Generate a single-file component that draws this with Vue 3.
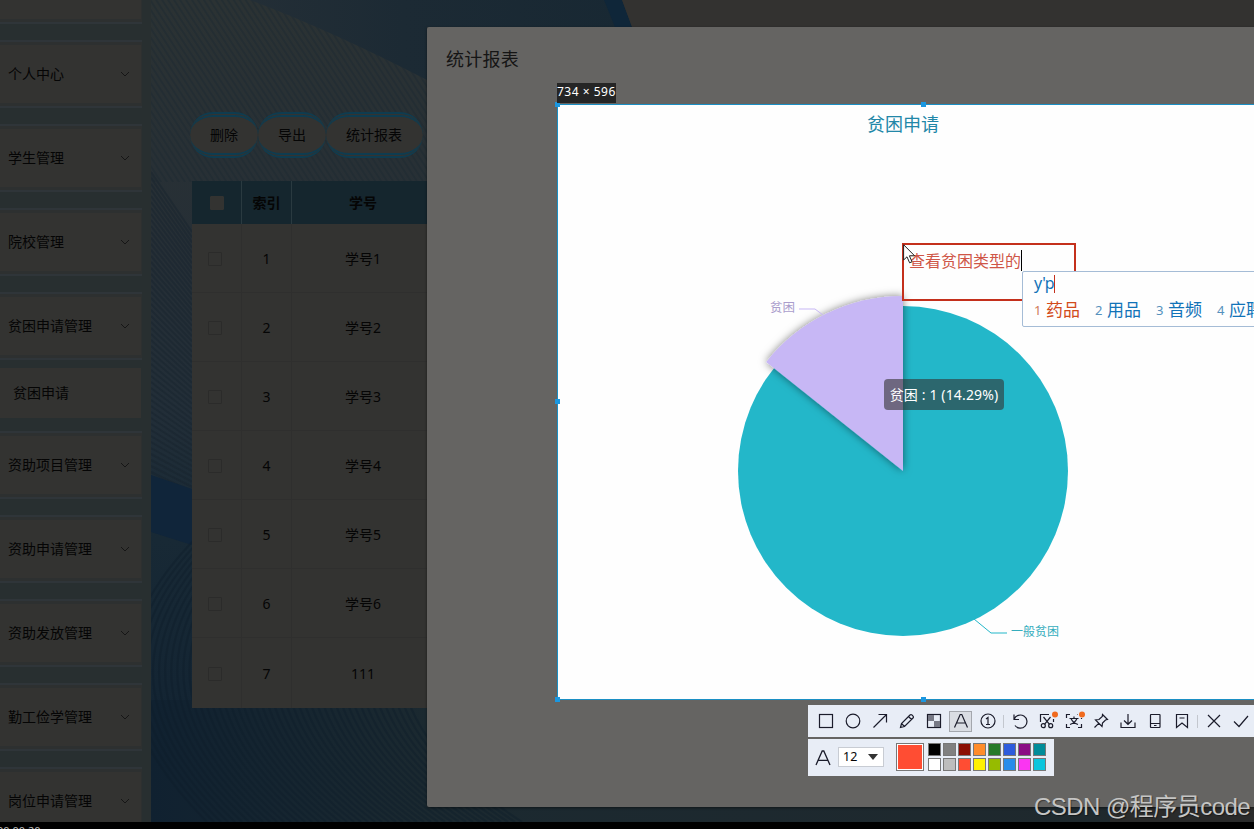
<script setup>
const menu = [
  { label: '', arrow: false },
  { label: '个人中心', arrow: true },
  { label: '学生管理', arrow: true },
  { label: '院校管理', arrow: true },
  { label: '贫困申请管理', arrow: true, child: '贫困申请' },
  { label: '资助项目管理', arrow: true },
  { label: '资助申请管理', arrow: true },
  { label: '资助发放管理', arrow: true },
  { label: '勤工俭学管理', arrow: true },
  { label: '岗位申请管理', arrow: true },
]
const actions = ['删除', '导出', '统计报表']
const rows = ['学号1', '学号2', '学号3', '学号4', '学号5', '学号6', '111']
const tools = ['rect', 'circle', 'arrow', 'pencil', 'mosaic', 'text', 'number', 'sep', 'undo', 'cut', 'translate', 'pin', 'save', 'phone', 'bookmark', 'sep', 'close', 'check']
const swatches = ['black', 'gray', 'maroon', 'orange', 'green', 'blue', 'purple', 'teal', 'white', 'silver', 'red', 'yellow', 'lime', 'sky', 'pink', 'cyan']
const words = ['药品', '用品', '音频', '应聘']
const fan = Array.from({ length: 52 }, (_, n) => `M151 ${172 + n * 6}L192 ${232 + n * 5.2}`)
</script>

<template>
  <div class="stage">
    <svg class="backdrop" width="1254" height="829" viewBox="0 0 1254 829">
      <defs>
        <linearGradient id="bg" x1="0" y1="0" x2="0" y2="1">
          <stop offset="0" stop-color="#2b3233" />
          <stop offset=".3" stop-color="#262f36" />
          <stop offset=".5" stop-color="#222e38" />
          <stop offset=".65" stop-color="#182935" />
          <stop offset="1" stop-color="#102131" />
        </linearGradient>
        <linearGradient id="sky" x1="0" y1="0" x2="1" y2="0">
          <stop offset="0" stop-color="#232e36" />
          <stop offset=".4" stop-color="#1c2a34" />
          <stop offset="1" stop-color="#182833" />
        </linearGradient>
        <linearGradient id="foot" x1="0" y1="0" x2="1" y2="0">
          <stop offset="0" stop-color="#102130" />
          <stop offset=".25" stop-color="#1b2930" />
          <stop offset="1" stop-color="#20292d" />
        </linearGradient>
        <pattern id="steep" width="5" height="5" patternUnits="userSpaceOnUse" patternTransform="rotate(-33)">
          <rect width="2" height="5" fill="#1d2a31" opacity=".5" />
        </pattern>
      </defs>
      <rect width="1254" height="829" fill="url(#bg)" />
      <rect width="460" height="182" fill="url(#steep)" />
      <path d="M250 0H622L632 27H427V80Q330 30 250 0Z" fill="url(#sky)" />
      <path d="M604 0H622L632 27H615Z" fill="#0f2639" />
      <path d="M622 0H1254V27H632Z" fill="#333230" />
      <path v-for="d in fan" :key="d" :d="d" fill="none" stroke="#17242e" stroke-width="2" opacity=".5" />
      <path d="M151 475L192 489V545L151 532Z" fill="#10253a" />
      <rect x="151" y="700" width="1103" height="122" fill="url(#foot)" />
      <path d="M1110 800H1254V822H1110Z" fill="#2a2b2b" />
      <g fill="none" stroke="#0e1d2a" stroke-width="2.2" opacity=".4">
        <path v-for="n in 46" :key="n" :d="`M${190 + n * 6} 538C${80 + n * 6} 650 ${120 + n * 6} 740 ${200 + n * 7} 822`" />
      </g>
    </svg>

    <div class="page">
      <nav class="side">
        <template v-for="(m, i) in menu" :key="i">
          <div class="item">
            <div class="card">
              <span>{{ m.label }}</span>
              <svg v-if="m.arrow" width="10" height="6" viewBox="0 0 10 6"><path d="M1 1L5 5L9 1" /></svg>
            </div>
          </div>
          <div v-if="m.child" class="child">{{ m.child }}</div>
        </template>
      </nav>
      <main class="content">
        <div class="actions">
          <button v-for="a in actions" :key="a">{{ a }}</button>
        </div>
        <div class="table">
          <div class="row head"><b><i class="box"></i></b><b>索引</b><b>学号</b></div>
          <div v-for="(r, i) in rows" :key="r" class="row">
            <span><i class="box"></i></span><span>{{ i + 1 }}</span><span>{{ r }}</span>
          </div>
        </div>
      </main>
    </div>

    <section class="dialog"><h2>统计报表</h2></section>

    <section class="capture">
      <svg class="chart" width="697" height="596" viewBox="557 104 697 596">
        <defs>
          <filter id="lift" x="-20%" y="-20%" width="140%" height="140%">
            <feDropShadow dx="0" dy="0" stdDeviation="4.5" flood-color="#000" flood-opacity=".5" />
          </filter>
        </defs>
        <rect x="557" y="104" width="697" height="596" fill="#fefefe" />
        <text x="903" y="130.5" font-size="18" text-anchor="middle" fill="#2287a8">贫困申请</text>
        <circle cx="903" cy="471" r="165" fill="#23b7c9" />
        <path d="M903 471L766.2 361.9A175 175 0 0 1 903 296Z" fill="#c7b7f5" filter="url(#lift)" />
        <path d="M799 309H815L823 315" fill="none" stroke="#c7b7f5" />
        <text x="770" y="312" font-size="12.5" fill="#aa9dcc">贫困</text>
        <path d="M974 619L991 633H1007" fill="none" stroke="#23b7c9" />
        <text x="1011" y="636" font-size="12" fill="#35adbd">一般贫困</text>
      </svg>
      <div class="tip">贫困 : 1 (14.29%)</div>
      <div class="frame"></div>
      <i class="knob tl"></i><i class="knob tc"></i><i class="knob ml"></i><i class="knob bl"></i><i class="knob bc"></i>
      <div class="size">734 × 596</div>
    </section>

    <div class="note"><span>查看贫困类型的</span><i></i></div>
    <svg class="cursor" width="14" height="21" viewBox="0 0 14 21"><path d="M.6.7V16L4 12.8L6.6 18.8L9 17.8L6.4 11.8H11.6Z" fill="#fff" stroke="#222" /></svg>

    <div class="ime">
      <div class="typed">y'p<i></i></div>
      <div class="words">
        <span v-for="(w, i) in words" :key="w" :class="{ on: i === 0 }"><small>{{ i + 1 }}</small>{{ w }}</span>
      </div>
    </div>

    <div class="tools">
      <template v-for="(t, i) in tools" :key="i">
        <i v-if="t === 'sep'" class="sep"></i>
        <span v-else class="tool" :class="{ active: t === 'text' }">
          <svg width="22" height="20" viewBox="0 0 22 20">
            <rect v-if="t === 'rect'" x="4.5" y="3.5" width="13" height="13" />
            <circle v-else-if="t === 'circle'" cx="11" cy="10" r="6.8" />
            <path v-else-if="t === 'arrow'" d="M4.5 16.5L17.5 3.5M9.5 3.5H17.5V11.5" />
            <path v-else-if="t === 'pencil'" d="M4.5 16.5L5.5 12.5L14 4Q15 3 16.2 4.2L16.8 4.8Q18 6 17 7L8.5 15.5ZM12.5 5.5L15.5 8.5M5.5 12.5L8.5 15.5" />
            <g v-else-if="t === 'mosaic'">
              <rect x="4.5" y="3.5" width="13" height="13" />
              <path d="M5 4H11V10H5ZM11 10H17V16H11Z" class="solid" />
            </g>
            <path v-else-if="t === 'text'" d="M4.5 16.5L10.2 3.5H11.8L17.5 16.5M6.5 12H15.5" />
            <g v-else-if="t === 'number'"><circle cx="11" cy="10" r="7" /><path d="M9 8L11 6.5V13.5M9 13.5H13" /></g>
            <path v-else-if="t === 'undo'" d="M5 3.5V8.5H10M5.2 8.2A6.6 6.6 0 1 1 6 14.5" />
            <g v-else-if="t === 'cut'">
              <path d="M4.5 11V3.5H13M17.5 8V11M7.5 6L13.5 13.3M14.5 6L8.5 13.3" />
              <circle cx="7.3" cy="14.7" r="2" /><circle cx="14.7" cy="14.7" r="2" />
              <circle class="dot" cx="19" cy="3.5" r="3" />
            </g>
            <g v-else-if="t === 'translate'">
              <path d="M3.5 7V3.5H7M14.5 3.5H15M18.5 7V8M3.5 13V16.5H7M15 16.5H18.5V13M6.5 7.5H15.5M11 5.5V7.5M14 7.5Q12 12 7 13.5M8 7.5Q10 12 15 13.5" />
              <circle class="dot" cx="19" cy="3.5" r="3" />
            </g>
            <path v-else-if="t === 'pin'" d="M12.5 3.5L17.5 8.5L15.5 9L12.5 12L12 15.5L5.5 9L9 8.5L12.3 5.5ZM8.7 12.3L4.5 16.5" />
            <path v-else-if="t === 'save'" d="M4 11.5V16.5H18V11.5M11 3V13M7 9.5L11 13.3L15 9.5" />
            <g v-else-if="t === 'phone'"><rect x="6.5" y="3.5" width="9.5" height="13" rx=".5" /><path d="M6.5 12.5H16M10 14.5H12.5" /></g>
            <path v-else-if="t === 'bookmark'" d="M5.5 3.5H16.5V16.5L11 12L5.5 16.5ZM8.5 7H13.5" />
            <path v-else-if="t === 'close'" d="M5 4L17 16M17 4L5 16" />
            <path v-else d="M4 10.5L9 15.5L18 5" />
          </svg>
        </span>
      </template>
    </div>

    <div class="style-bar">
      <svg class="letter" width="16" height="16" viewBox="0 0 16 16"><path d="M1 15L7.2 1H8.8L15 15M3.2 10.3H12.8" /></svg>
      <div class="select">12<svg width="10" height="6" viewBox="0 0 10 6"><path d="M0 0H10L5 6Z" /></svg></div>
      <i class="current"></i>
      <div class="palette"><i v-for="s in swatches" :key="s" :class="s"></i></div>
    </div>

    <div class="mark">CSDN @程序员code</div>
    <footer class="player"><span>00:00:20</span></footer>
  </div>
</template>

<style>
body { background: #000; overflow: hidden; }
</style>

<style scoped>
* { box-sizing: border-box; }
.stage { position: relative; width: 1254px; height: 829px; overflow: hidden; font: 14px/20px "Noto Sans", "Noto Sans CJK SC", sans-serif; color: #050505; }
.backdrop { position: absolute; inset: 0; display: block; }
.page { position: relative; display: flex; height: 822px; overflow: hidden; }
.side { flex: none; width: 151px; height: 866px; margin-top: -44px; background: #282f30; display: flex; flex-direction: column; }
.item { flex: none; width: 142px; height: 68px; margin-bottom: 16px; padding: 3px 1px 3px 0; border: solid #2f3539; border-width: 2px 0; background: #2d3030; }
.card { height: 58px; display: flex; align-items: center; justify-content: space-between; padding: 0 11px 0 8px; background: #333331; }
.card svg { fill: none; stroke: #161616; }
.child { flex: none; width: 141px; height: 50px; margin: -8px 0 13px; padding-left: 13px; line-height: 50px; background: #333331; }
.content { padding: 112px 0 0 40px; }
.actions { display: flex; margin-left: -1px; }
.actions button { height: 46px; padding: 0 20px; border: 5px double #0f3c50; border-width: 5px 0; border-radius: 23px; background: #333331; color: #050505; font: inherit; }
.actions button:last-child { padding: 0 21px 0 20px; }
.table { margin: 23px 0 0 1px; width: 260px; background: #333331; }
.row { display: grid; grid-template-columns: 50px 50px 142px; height: 69px; }
.row > * { display: flex; align-items: center; justify-content: center; padding-top: 2px; border-right: 1px solid #2f2f2e; border-bottom: 1px solid #2f2f2e; }
.row:last-child > * { border-bottom: 0; }
.row.head { width: 260px; height: 43px; background: #15262e; }
.head > * { padding-top: 0; border-color: #2a3a40; border-bottom: 0; }
.row > :last-child { border-right: 0; }
.row:last-child { height: 70px; }
.box { width: 14px; height: 14px; border: 1px solid #2b2b2a; margin-right: 3px; border-radius: 1px; }
.head .box { background: #333331; border-color: #333331; margin-right: 0; }
.dialog { position: absolute; left: 427px; top: 27px; width: 850px; height: 780px; background: #656462; border-radius: 2px; box-shadow: 0 1px 3px #0007; padding: 20px 19px; }
h2 { margin: 0; font-size: 18px; line-height: 24px; font-weight: 400; letter-spacing: .25px; color: #151515; }
.capture { position: absolute; left: 557px; top: 104px; width: 734px; height: 596px; }
.chart { display: block; font-family: "Noto Sans CJK SC", sans-serif; }
.frame { position: absolute; inset: 0; border: 1px solid #1b8fc4; }
.knob { position: absolute; width: 5px; height: 5px; background: #1b97e0; }
.tl { left: -2px; top: -2px; }
.tc { left: 364px; top: -2px; }
.ml { left: -2px; top: 295px; }
.bl { left: -2px; bottom: -2px; }
.bc { left: 364px; bottom: -2px; }
.size { position: absolute; left: 0; top: -21px; width: 59px; height: 20px; line-height: 18px; font-size: 12px; letter-spacing: .5px; color: #fff; background: #252525; white-space: nowrap; }
.tip { position: absolute; left: 327px; top: 275px; width: 120px; height: 31px; border-radius: 4px; background: rgba(50, 50, 50, .6); color: #fff; text-align: center; line-height: 31px; letter-spacing: .15px; white-space: nowrap; }
.note { position: absolute; left: 902px; top: 243px; width: 174px; height: 58px; border: 2px solid #c4301c; display: flex; padding: 5px 0 0 5px; font-size: 16px; line-height: 22px; color: #cf5647; white-space: nowrap; }
.note i { width: 1px; height: 21px; background: #000; }
.cursor { position: absolute; left: 903px; top: 244px; }
.ime { position: absolute; left: 1022px; top: 271px; width: 260px; height: 56px; border: 1px solid #a5bcd6; border-radius: 2px; background: #fefefe; padding: 1px 0 0 11px; color: #1173b8; }
.typed { display: flex; font-size: 16px; line-height: 20px; letter-spacing: -.6px; }
.typed i { width: 1px; height: 18px; margin-top: 2px; background: #c4301c; }
.words { display: flex; gap: 15px; margin-top: 5px; font-size: 17px; line-height: 24px; white-space: nowrap; }
.words span { display: flex; }
.words small { width: 12px; font-size: 13px; color: #5591bd; }
.words .on { color: #d24b1b; }
.words .on small { color: #cf7a58; }
.tools { position: absolute; left: 808px; top: 705px; width: 460px; height: 32px; padding-left: 4px; display: flex; align-items: center; background: #e8edf6; }
.tool { flex: none; width: 23px; height: 21px; margin: 0 2px; display: flex; align-items: center; justify-content: center; }
.tool.active { background: #dadde3; outline: 1px solid #a4a7ad; outline-offset: -1px; }
.tool svg { flex: none; fill: none; stroke: #1b1c2b; stroke-width: 1.2; overflow: visible; }
.tool .solid { fill: #777985; stroke: none; }
.tool .dot { fill: #f06a1d; stroke: none; }
.sep { flex: none; width: 1px; height: 13px; margin: 0 2px; background: #c3c7ce; }
.style-bar { position: absolute; left: 808px; top: 739px; width: 246px; height: 37px; display: flex; align-items: center; padding-left: 7px; background: #e8edf6; }
.letter { fill: none; stroke: #1b1c2b; stroke-width: 1.3; }
.select { width: 46px; height: 20px; margin: 0 0 2px 7px; padding: 0 5px 0 4px; display: flex; align-items: center; justify-content: space-between; font-size: 12.5px; background: #fff; border: 1px solid #c8ccd3; }
.select svg { fill: #333; }
.current { width: 28px; height: 28px; margin: 0 0 2px 12px; border: 1px solid #777; background: #ff4d33; box-shadow: inset 0 0 0 1px #fff; }
.palette { margin: 0 0 2px 4px; display: grid; grid-template-columns: repeat(8, 13px); gap: 2px; }
.palette i { height: 13px; border: 1px solid #777; }
.black { background: #000; } .gray { background: #808080; } .maroon { background: #8b0f05; } .orange { background: #ff8c2b; }
.green { background: #267a2a; } .blue { background: #2d5bdc; } .purple { background: #8a0d85; } .teal { background: #008c99; }
.white { background: #fff; } .silver { background: #bdbdbd; } .red { background: #ff4d33; } .yellow { background: #fff100; }
.lime { background: #96bb00; } .sky { background: #288ceb; } .pink { background: #fa35f2; } .cyan { background: #0ac5dd; }
.mark { position: absolute; left: 1034px; top: 791px; font: 24px/32px "Liberation Sans", "Noto Sans CJK SC", sans-serif; color: #c5c5c4; text-shadow: 1px 1px 1px #0006; white-space: nowrap; letter-spacing: -.53px; z-index: 2; }
.player { position: absolute; left: 0; bottom: 0; width: 100%; height: 7px; background: #000; overflow: hidden; }
.player span { display: block; font-size: 11px; line-height: 14px; margin-top: 2px; margin-left: -3px; color: #bbb; }
</style>
